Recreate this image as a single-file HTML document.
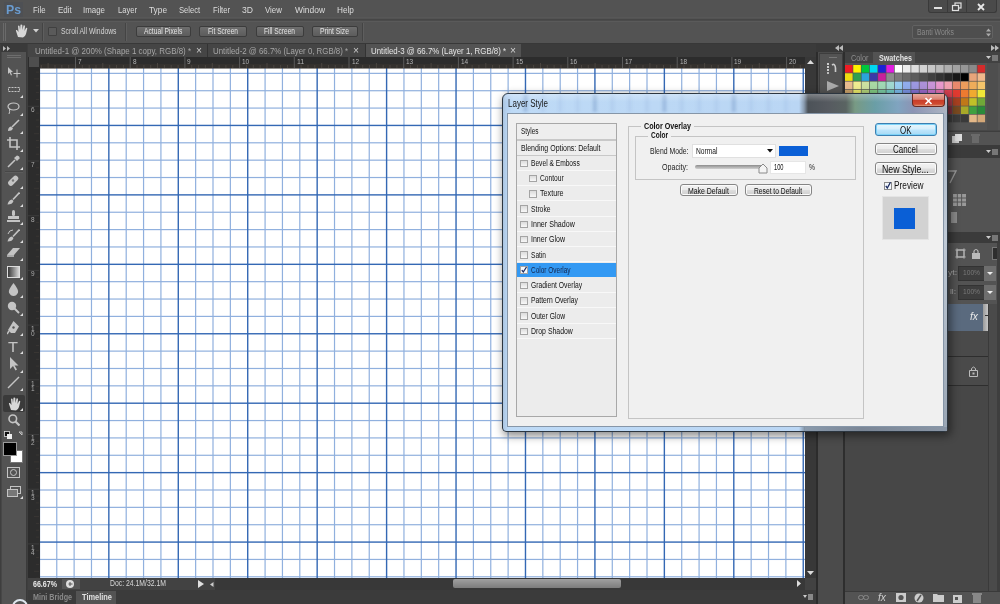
<!DOCTYPE html><html><head><meta charset="utf-8"><style>
html,body{margin:0;padding:0;width:1000px;height:604px;overflow:hidden;background:#535353;}
body>div,body>span,body>svg{position:absolute;}
span{font-family:"Liberation Sans",sans-serif;white-space:nowrap;transform-origin:0 50%;display:block;}
</style></head><body>
<div style="left:0px;top:0px;width:1000px;height:604px;background:#535353;"></div>
<div style="left:0px;top:0px;width:1000px;height:18px;background:#535353;"></div>
<div style="left:0px;top:17px;width:1000px;height:1px;background:#575757;"></div>
<div style="left:0px;top:19px;width:1000px;height:1px;background:#464646;"></div>
<div style="left:0px;top:20px;width:1000px;height:1px;background:#4b4b4b;"></div>
<div style="left:0px;top:21px;width:1000px;height:1px;background:#5a5a5a;"></div>
<div style="left:0px;top:22px;width:1000px;height:21px;background:#535353;"></div>
<div style="left:0px;top:43px;width:1000px;height:1px;background:#383838;"></div>
<div style="left:4px;top:2px;width:19px;height:15px;background:#4e5054;"></div>
<span style="left:5.5px;top:3.08px;font-size:13px;line-height:13px;color:#6a9cd0;font-weight:700;transform:scaleX(0.943);-webkit-text-stroke:0;">Ps</span>
<span style="left:33px;top:5.04px;font-size:9.5px;line-height:9.5px;color:#dcdcdc;transform:scaleX(0.823);">File</span>
<span style="left:57.6px;top:5.04px;font-size:9.5px;line-height:9.5px;color:#dcdcdc;transform:scaleX(0.843);">Edit</span>
<span style="left:83px;top:5.04px;font-size:9.5px;line-height:9.5px;color:#dcdcdc;transform:scaleX(0.833);">Image</span>
<span style="left:117.8px;top:5.04px;font-size:9.5px;line-height:9.5px;color:#dcdcdc;transform:scaleX(0.800);">Layer</span>
<span style="left:148.6px;top:5.04px;font-size:9.5px;line-height:9.5px;color:#dcdcdc;transform:scaleX(0.874);">Type</span>
<span style="left:178.8px;top:5.04px;font-size:9.5px;line-height:9.5px;color:#dcdcdc;transform:scaleX(0.803);">Select</span>
<span style="left:213.2px;top:5.04px;font-size:9.5px;line-height:9.5px;color:#dcdcdc;transform:scaleX(0.810);">Filter</span>
<span style="left:242.4px;top:5.04px;font-size:9.5px;line-height:9.5px;color:#dcdcdc;transform:scaleX(0.906);">3D</span>
<span style="left:265.1px;top:5.04px;font-size:9.5px;line-height:9.5px;color:#dcdcdc;transform:scaleX(0.828);">View</span>
<span style="left:295px;top:5.04px;font-size:9.5px;line-height:9.5px;color:#dcdcdc;transform:scaleX(0.888);">Window</span>
<span style="left:337.3px;top:5.04px;font-size:9.5px;line-height:9.5px;color:#dcdcdc;transform:scaleX(0.865);">Help</span>
<div style="left:928px;top:0px;width:69px;height:13px;background:#4a4a4a;border:1px solid #3a3a3a;border-top:none;border-radius:0 0 3px 3px;box-sizing:border-box;"></div>
<div style="left:947px;top:0px;width:1px;height:13px;background:#3a3a3a;"></div>
<div style="left:966px;top:0px;width:1px;height:13px;background:#3a3a3a;"></div>
<div style="left:933.5px;top:7px;width:8px;height:2px;background:#e0e0e0;"></div>
<svg style="left:951px;top:2px" width="12" height="10"><rect x="4" y="1" width="6" height="5" fill="none" stroke="#e0e0e0" stroke-width="1.2"/><rect x="1.5" y="3.5" width="6" height="5" fill="#4a4a4a" stroke="#e0e0e0" stroke-width="1.2"/></svg>
<svg style="left:976px;top:2px" width="10" height="10"><path d="M2 2L8 8M8 2L2 8" stroke="#e8e8e8" stroke-width="1.8"/></svg>
<div style="left:3px;top:23px;width:1px;height:18px;background:#6a6a6a;"></div>
<div style="left:5px;top:23px;width:1px;height:18px;background:#6a6a6a;"></div>
<svg style="left:14px;top:23px" width="16" height="16" viewBox="0 0 16 16"><path d="M4 14 L2 8 Q1.5 6.5 3 7 L4.5 9 L4 3 Q4.5 2 5.5 3 L6 7 L6.5 1.8 Q7.5 1 8.3 2 L8.5 7 L9.5 2.5 Q10.5 2 11 3 L10.5 8 L12 5 Q13 4.5 13.3 5.5 L12 11 Q11 14 9 14.5 Z" fill="#d8d8d8"/></svg>
<svg style="left:33px;top:29px" width="6" height="4"><path d="M0 0H6L3 3.5Z" fill="#d0d0d0"/></svg>
<div style="left:42px;top:23px;width:1px;height:18px;background:#444;"></div>
<div style="left:43px;top:23px;width:1px;height:18px;background:#5e5e5e;"></div>
<div style="left:47.5px;top:27px;width:9px;height:9px;background:#5a5a5a;border:1px solid #404040;box-sizing:border-box;border-radius:1px;"></div>
<span style="left:60.5px;top:26.79px;font-size:9px;line-height:9px;color:#d4d4d4;transform:scaleX(0.755);">Scroll All Windows</span>
<div style="left:125px;top:23px;width:1px;height:18px;background:#444;"></div>
<div style="left:126px;top:23px;width:1px;height:18px;background:#5e5e5e;"></div>
<div style="left:135.6px;top:25.9px;width:55.599999999999994px;height:11.5px;background:linear-gradient(#6e6e6e,#5c5c5c);border:1px solid #3c3c3c;box-sizing:border-box;border-radius:2px;"></div>
<span style="left:144.2px;top:27.09px;font-size:9px;line-height:9px;color:#e4e4e4;transform:scaleX(0.745);">Actual Pixels</span>
<div style="left:199px;top:25.9px;width:47.599999999999994px;height:11.5px;background:linear-gradient(#6e6e6e,#5c5c5c);border:1px solid #3c3c3c;box-sizing:border-box;border-radius:2px;"></div>
<span style="left:207.8px;top:27.09px;font-size:9px;line-height:9px;color:#e4e4e4;transform:scaleX(0.731);">Fit Screen</span>
<div style="left:255.5px;top:25.9px;width:48.5px;height:11.5px;background:linear-gradient(#6e6e6e,#5c5c5c);border:1px solid #3c3c3c;box-sizing:border-box;border-radius:2px;"></div>
<span style="left:264.25px;top:27.09px;font-size:9px;line-height:9px;color:#e4e4e4;transform:scaleX(0.729);">Fill Screen</span>
<div style="left:312px;top:25.9px;width:45.5px;height:11.5px;background:linear-gradient(#6e6e6e,#5c5c5c);border:1px solid #3c3c3c;box-sizing:border-box;border-radius:2px;"></div>
<span style="left:320.25px;top:27.09px;font-size:9px;line-height:9px;color:#e4e4e4;transform:scaleX(0.753);">Print Size</span>
<div style="left:362px;top:23px;width:1px;height:18px;background:#444;"></div>
<div style="left:363px;top:23px;width:1px;height:18px;background:#5e5e5e;"></div>
<div style="left:912px;top:25px;width:81px;height:14px;background:#4e4e4e;border:1px solid #626262;box-sizing:border-box;border-radius:2px;"></div>
<span style="left:917px;top:27.74px;font-size:8.5px;line-height:8.5px;color:#8a8a8a;transform:scaleX(0.810);">Banti Works</span>
<svg style="left:986px;top:28px" width="5" height="9"><path d="M0 3.5L2.5 0.5L5 3.5ZM0 5.5L2.5 8.5L5 5.5Z" fill="#aaa"/></svg>
<div style="left:28px;top:44px;width:790px;height:13px;background:#3b3b3b;"></div>
<div style="left:28px;top:44px;width:179px;height:13px;background:#454545;"></div>
<div style="left:207px;top:44px;width:1px;height:13px;background:#333;"></div>
<div style="left:208px;top:44px;width:157px;height:13px;background:#454545;"></div>
<div style="left:365px;top:44px;width:1px;height:13px;background:#333;"></div>
<div style="left:366px;top:44px;width:155px;height:13px;background:#535353;"></div>
<span style="left:35px;top:46.89px;font-size:9px;line-height:9px;color:#a6a6a6;transform:scaleX(0.884);">Untitled-1 @ 200% (Shape 1 copy, RGB/8) *</span>
<span style="left:196px;top:46.38px;font-size:10px;line-height:10px;color:#c8c8c8;transform:scaleX(1.027);">×</span>
<span style="left:213px;top:46.89px;font-size:9px;line-height:9px;color:#a6a6a6;transform:scaleX(0.873);">Untitled-2 @ 66.7% (Layer 0, RGB/8) *</span>
<span style="left:353px;top:46.38px;font-size:10px;line-height:10px;color:#c8c8c8;transform:scaleX(1.027);">×</span>
<span style="left:371px;top:46.89px;font-size:9px;line-height:9px;color:#e6e6e6;transform:scaleX(0.873);">Untitled-3 @ 66.7% (Layer 1, RGB/8) *</span>
<span style="left:510px;top:46.38px;font-size:10px;line-height:10px;color:#d0d0d0;transform:scaleX(1.027);">×</span>
<div style="left:0px;top:44px;width:28px;height:560px;background:#3e3e3e;"></div>
<div style="left:1px;top:44px;width:26px;height:8px;background:#3a3a3a;"></div>
<svg style="left:3px;top:46px" width="8" height="5"><path d="M0 0L3 2.5L0 5ZM4 0L7 2.5L4 5Z" fill="#bbb"/></svg>
<div style="left:1px;top:52px;width:26px;height:552px;background:#535353;border-left:1px solid #474747;border-right:1px solid #3a3a3a;box-sizing:border-box;"></div>
<div style="left:7px;top:55px;width:14px;height:1px;background:#6e6e6e;"></div>
<div style="left:7px;top:57px;width:14px;height:1px;background:#6e6e6e;"></div>
<div style="left:28px;top:57px;width:777px;height:11px;background:#2c2c2c;"></div>
<div style="left:28px;top:57px;width:12px;height:521px;background:#2c2c2c;"></div>
<div style="left:29px;top:57px;width:10px;height:10px;background:#4e4e4e;"></div>
<div style="left:40px;top:64px;width:765px;height:4px;background:#34312e;"></div>
<div style="left:40px;top:68px;width:765px;height:510px;background:#ffffff;"></div>
<div style="left:805px;top:57px;width:11px;height:521px;background:#383838;"></div>
<div style="left:805px;top:578px;width:11px;height:10px;background:#4a4a4a;"></div>
<div style="left:28px;top:578px;width:790px;height:12px;background:#424242;"></div>
<div style="left:28px;top:590px;width:790px;height:14px;background:#3b3b3b;"></div>
<div style="left:816px;top:44px;width:2px;height:560px;background:#2c2c2c;"></div>
<div style="left:818px;top:52px;width:25px;height:552px;background:#4b4b4b;"></div>
<div style="left:843px;top:44px;width:2px;height:560px;background:#2e2e2e;"></div>
<div style="left:845px;top:44px;width:155px;height:560px;background:#474747;"></div>
<svg style="left:40px;top:68px" width="765" height="510"><rect x="16.16" y="0" width="1.2" height="510" fill="#90b0de"/><rect x="33.52" y="0" width="1.2" height="510" fill="#90b0de"/><rect x="50.88" y="0" width="1.2" height="510" fill="#90b0de"/><rect x="85.60" y="0" width="1.2" height="510" fill="#90b0de"/><rect x="102.96" y="0" width="1.2" height="510" fill="#90b0de"/><rect x="120.32" y="0" width="1.2" height="510" fill="#90b0de"/><rect x="155.04" y="0" width="1.2" height="510" fill="#90b0de"/><rect x="172.40" y="0" width="1.2" height="510" fill="#90b0de"/><rect x="189.76" y="0" width="1.2" height="510" fill="#90b0de"/><rect x="224.48" y="0" width="1.2" height="510" fill="#90b0de"/><rect x="241.84" y="0" width="1.2" height="510" fill="#90b0de"/><rect x="259.20" y="0" width="1.2" height="510" fill="#90b0de"/><rect x="293.92" y="0" width="1.2" height="510" fill="#90b0de"/><rect x="311.28" y="0" width="1.2" height="510" fill="#90b0de"/><rect x="328.64" y="0" width="1.2" height="510" fill="#90b0de"/><rect x="363.36" y="0" width="1.2" height="510" fill="#90b0de"/><rect x="380.72" y="0" width="1.2" height="510" fill="#90b0de"/><rect x="398.08" y="0" width="1.2" height="510" fill="#90b0de"/><rect x="432.80" y="0" width="1.2" height="510" fill="#90b0de"/><rect x="450.16" y="0" width="1.2" height="510" fill="#90b0de"/><rect x="467.52" y="0" width="1.2" height="510" fill="#90b0de"/><rect x="502.24" y="0" width="1.2" height="510" fill="#90b0de"/><rect x="519.60" y="0" width="1.2" height="510" fill="#90b0de"/><rect x="536.96" y="0" width="1.2" height="510" fill="#90b0de"/><rect x="571.68" y="0" width="1.2" height="510" fill="#90b0de"/><rect x="589.04" y="0" width="1.2" height="510" fill="#90b0de"/><rect x="606.40" y="0" width="1.2" height="510" fill="#90b0de"/><rect x="641.12" y="0" width="1.2" height="510" fill="#90b0de"/><rect x="658.48" y="0" width="1.2" height="510" fill="#90b0de"/><rect x="675.84" y="0" width="1.2" height="510" fill="#90b0de"/><rect x="710.56" y="0" width="1.2" height="510" fill="#90b0de"/><rect x="727.92" y="0" width="1.2" height="510" fill="#90b0de"/><rect x="745.28" y="0" width="1.2" height="510" fill="#90b0de"/><rect x="0" y="4.76" width="765" height="1.2" fill="#90b0de"/><rect x="0" y="22.12" width="765" height="1.2" fill="#90b0de"/><rect x="0" y="39.48" width="765" height="1.2" fill="#90b0de"/><rect x="0" y="74.20" width="765" height="1.2" fill="#90b0de"/><rect x="0" y="91.56" width="765" height="1.2" fill="#90b0de"/><rect x="0" y="108.92" width="765" height="1.2" fill="#90b0de"/><rect x="0" y="143.64" width="765" height="1.2" fill="#90b0de"/><rect x="0" y="161.00" width="765" height="1.2" fill="#90b0de"/><rect x="0" y="178.36" width="765" height="1.2" fill="#90b0de"/><rect x="0" y="213.08" width="765" height="1.2" fill="#90b0de"/><rect x="0" y="230.44" width="765" height="1.2" fill="#90b0de"/><rect x="0" y="247.80" width="765" height="1.2" fill="#90b0de"/><rect x="0" y="282.52" width="765" height="1.2" fill="#90b0de"/><rect x="0" y="299.88" width="765" height="1.2" fill="#90b0de"/><rect x="0" y="317.24" width="765" height="1.2" fill="#90b0de"/><rect x="0" y="351.96" width="765" height="1.2" fill="#90b0de"/><rect x="0" y="369.32" width="765" height="1.2" fill="#90b0de"/><rect x="0" y="386.68" width="765" height="1.2" fill="#90b0de"/><rect x="0" y="421.40" width="765" height="1.2" fill="#90b0de"/><rect x="0" y="438.76" width="765" height="1.2" fill="#90b0de"/><rect x="0" y="456.12" width="765" height="1.2" fill="#90b0de"/><rect x="0" y="490.84" width="765" height="1.2" fill="#90b0de"/><rect x="0" y="508.20" width="765" height="1.2" fill="#90b0de"/><rect x="-1.30" y="0" width="1.4" height="510" fill="#3468b4"/><rect x="68.14" y="0" width="1.4" height="510" fill="#3468b4"/><rect x="137.58" y="0" width="1.4" height="510" fill="#3468b4"/><rect x="207.02" y="0" width="1.4" height="510" fill="#3468b4"/><rect x="276.46" y="0" width="1.4" height="510" fill="#3468b4"/><rect x="345.90" y="0" width="1.4" height="510" fill="#3468b4"/><rect x="415.34" y="0" width="1.4" height="510" fill="#3468b4"/><rect x="484.78" y="0" width="1.4" height="510" fill="#3468b4"/><rect x="554.22" y="0" width="1.4" height="510" fill="#3468b4"/><rect x="623.66" y="0" width="1.4" height="510" fill="#3468b4"/><rect x="693.10" y="0" width="1.4" height="510" fill="#3468b4"/><rect x="762.54" y="0" width="1.4" height="510" fill="#3468b4"/><rect x="0" y="56.74" width="765" height="1.4" fill="#3468b4"/><rect x="0" y="126.18" width="765" height="1.4" fill="#3468b4"/><rect x="0" y="195.62" width="765" height="1.4" fill="#3468b4"/><rect x="0" y="265.06" width="765" height="1.4" fill="#3468b4"/><rect x="0" y="334.50" width="765" height="1.4" fill="#3468b4"/><rect x="0" y="403.94" width="765" height="1.4" fill="#3468b4"/><rect x="0" y="473.38" width="765" height="1.4" fill="#3468b4"/></svg>
<div style="left:40px;top:68px;width:765px;height:1px;background:rgba(52,49,46,0.55);"></div>
<svg style="left:40px;top:57px" width="765" height="11"><rect x="0.8" y="8" width="1" height="3" fill="#4a4540"/><rect x="7.6" y="6" width="1" height="5" fill="#4a4540"/><rect x="14.5" y="8" width="1" height="3" fill="#4a4540"/><rect x="21.3" y="8" width="1" height="3" fill="#4a4540"/><rect x="28.2" y="8" width="1" height="3" fill="#4a4540"/><rect x="35.0" y="0" width="1" height="11" fill="#5a5a5a"/><rect x="41.8" y="8" width="1" height="3" fill="#4a4540"/><rect x="48.7" y="8" width="1" height="3" fill="#4a4540"/><rect x="55.5" y="8" width="1" height="3" fill="#4a4540"/><rect x="62.3" y="6" width="1" height="5" fill="#4a4540"/><rect x="69.2" y="8" width="1" height="3" fill="#4a4540"/><rect x="76.0" y="8" width="1" height="3" fill="#4a4540"/><rect x="82.9" y="8" width="1" height="3" fill="#4a4540"/><rect x="89.7" y="0" width="1" height="11" fill="#5a5a5a"/><rect x="96.5" y="8" width="1" height="3" fill="#4a4540"/><rect x="103.4" y="8" width="1" height="3" fill="#4a4540"/><rect x="110.2" y="8" width="1" height="3" fill="#4a4540"/><rect x="117.0" y="6" width="1" height="5" fill="#4a4540"/><rect x="123.9" y="8" width="1" height="3" fill="#4a4540"/><rect x="130.7" y="8" width="1" height="3" fill="#4a4540"/><rect x="137.6" y="8" width="1" height="3" fill="#4a4540"/><rect x="144.4" y="0" width="1" height="11" fill="#5a5a5a"/><rect x="151.2" y="8" width="1" height="3" fill="#4a4540"/><rect x="158.1" y="8" width="1" height="3" fill="#4a4540"/><rect x="164.9" y="8" width="1" height="3" fill="#4a4540"/><rect x="171.8" y="6" width="1" height="5" fill="#4a4540"/><rect x="178.6" y="8" width="1" height="3" fill="#4a4540"/><rect x="185.4" y="8" width="1" height="3" fill="#4a4540"/><rect x="192.3" y="8" width="1" height="3" fill="#4a4540"/><rect x="199.1" y="0" width="1" height="11" fill="#5a5a5a"/><rect x="205.9" y="8" width="1" height="3" fill="#4a4540"/><rect x="212.8" y="8" width="1" height="3" fill="#4a4540"/><rect x="219.6" y="8" width="1" height="3" fill="#4a4540"/><rect x="226.5" y="6" width="1" height="5" fill="#4a4540"/><rect x="233.3" y="8" width="1" height="3" fill="#4a4540"/><rect x="240.1" y="8" width="1" height="3" fill="#4a4540"/><rect x="247.0" y="8" width="1" height="3" fill="#4a4540"/><rect x="253.8" y="0" width="1" height="11" fill="#5a5a5a"/><rect x="260.6" y="8" width="1" height="3" fill="#4a4540"/><rect x="267.5" y="8" width="1" height="3" fill="#4a4540"/><rect x="274.3" y="8" width="1" height="3" fill="#4a4540"/><rect x="281.2" y="6" width="1" height="5" fill="#4a4540"/><rect x="288.0" y="8" width="1" height="3" fill="#4a4540"/><rect x="294.8" y="8" width="1" height="3" fill="#4a4540"/><rect x="301.7" y="8" width="1" height="3" fill="#4a4540"/><rect x="308.5" y="0" width="1" height="11" fill="#5a5a5a"/><rect x="315.3" y="8" width="1" height="3" fill="#4a4540"/><rect x="322.2" y="8" width="1" height="3" fill="#4a4540"/><rect x="329.0" y="8" width="1" height="3" fill="#4a4540"/><rect x="335.9" y="6" width="1" height="5" fill="#4a4540"/><rect x="342.7" y="8" width="1" height="3" fill="#4a4540"/><rect x="349.5" y="8" width="1" height="3" fill="#4a4540"/><rect x="356.4" y="8" width="1" height="3" fill="#4a4540"/><rect x="363.2" y="0" width="1" height="11" fill="#5a5a5a"/><rect x="370.0" y="8" width="1" height="3" fill="#4a4540"/><rect x="376.9" y="8" width="1" height="3" fill="#4a4540"/><rect x="383.7" y="8" width="1" height="3" fill="#4a4540"/><rect x="390.6" y="6" width="1" height="5" fill="#4a4540"/><rect x="397.4" y="8" width="1" height="3" fill="#4a4540"/><rect x="404.2" y="8" width="1" height="3" fill="#4a4540"/><rect x="411.1" y="8" width="1" height="3" fill="#4a4540"/><rect x="417.9" y="0" width="1" height="11" fill="#5a5a5a"/><rect x="424.7" y="8" width="1" height="3" fill="#4a4540"/><rect x="431.6" y="8" width="1" height="3" fill="#4a4540"/><rect x="438.4" y="8" width="1" height="3" fill="#4a4540"/><rect x="445.3" y="6" width="1" height="5" fill="#4a4540"/><rect x="452.1" y="8" width="1" height="3" fill="#4a4540"/><rect x="458.9" y="8" width="1" height="3" fill="#4a4540"/><rect x="465.8" y="8" width="1" height="3" fill="#4a4540"/><rect x="472.6" y="0" width="1" height="11" fill="#5a5a5a"/><rect x="479.4" y="8" width="1" height="3" fill="#4a4540"/><rect x="486.3" y="8" width="1" height="3" fill="#4a4540"/><rect x="493.1" y="8" width="1" height="3" fill="#4a4540"/><rect x="500.0" y="6" width="1" height="5" fill="#4a4540"/><rect x="506.8" y="8" width="1" height="3" fill="#4a4540"/><rect x="513.6" y="8" width="1" height="3" fill="#4a4540"/><rect x="520.5" y="8" width="1" height="3" fill="#4a4540"/><rect x="527.3" y="0" width="1" height="11" fill="#5a5a5a"/><rect x="534.1" y="8" width="1" height="3" fill="#4a4540"/><rect x="541.0" y="8" width="1" height="3" fill="#4a4540"/><rect x="547.8" y="8" width="1" height="3" fill="#4a4540"/><rect x="554.6" y="6" width="1" height="5" fill="#4a4540"/><rect x="561.5" y="8" width="1" height="3" fill="#4a4540"/><rect x="568.3" y="8" width="1" height="3" fill="#4a4540"/><rect x="575.2" y="8" width="1" height="3" fill="#4a4540"/><rect x="582.0" y="0" width="1" height="11" fill="#5a5a5a"/><rect x="588.8" y="8" width="1" height="3" fill="#4a4540"/><rect x="595.7" y="8" width="1" height="3" fill="#4a4540"/><rect x="602.5" y="8" width="1" height="3" fill="#4a4540"/><rect x="609.4" y="6" width="1" height="5" fill="#4a4540"/><rect x="616.2" y="8" width="1" height="3" fill="#4a4540"/><rect x="623.0" y="8" width="1" height="3" fill="#4a4540"/><rect x="629.9" y="8" width="1" height="3" fill="#4a4540"/><rect x="636.7" y="0" width="1" height="11" fill="#5a5a5a"/><rect x="643.5" y="8" width="1" height="3" fill="#4a4540"/><rect x="650.4" y="8" width="1" height="3" fill="#4a4540"/><rect x="657.2" y="8" width="1" height="3" fill="#4a4540"/><rect x="664.1" y="6" width="1" height="5" fill="#4a4540"/><rect x="670.9" y="8" width="1" height="3" fill="#4a4540"/><rect x="677.7" y="8" width="1" height="3" fill="#4a4540"/><rect x="684.6" y="8" width="1" height="3" fill="#4a4540"/><rect x="691.4" y="0" width="1" height="11" fill="#5a5a5a"/><rect x="698.2" y="8" width="1" height="3" fill="#4a4540"/><rect x="705.1" y="8" width="1" height="3" fill="#4a4540"/><rect x="711.9" y="8" width="1" height="3" fill="#4a4540"/><rect x="718.8" y="6" width="1" height="5" fill="#4a4540"/><rect x="725.6" y="8" width="1" height="3" fill="#4a4540"/><rect x="732.4" y="8" width="1" height="3" fill="#4a4540"/><rect x="739.3" y="8" width="1" height="3" fill="#4a4540"/><rect x="746.1" y="0" width="1" height="11" fill="#5a5a5a"/><rect x="752.9" y="8" width="1" height="3" fill="#4a4540"/><rect x="759.8" y="8" width="1" height="3" fill="#4a4540"/></svg>
<span style="left:78.0px;top:57.99px;font-size:7px;line-height:7px;color:#b4b4b4;transform:scaleX(0.925);">7</span>
<span style="left:132.7px;top:57.99px;font-size:7px;line-height:7px;color:#b4b4b4;transform:scaleX(0.925);">8</span>
<span style="left:187.4px;top:57.99px;font-size:7px;line-height:7px;color:#b4b4b4;transform:scaleX(0.925);">9</span>
<span style="left:242.10000000000002px;top:57.99px;font-size:7px;line-height:7px;color:#b4b4b4;transform:scaleX(0.925);">10</span>
<span style="left:296.8px;top:57.99px;font-size:7px;line-height:7px;color:#b4b4b4;transform:scaleX(0.991);">11</span>
<span style="left:351.5px;top:57.99px;font-size:7px;line-height:7px;color:#b4b4b4;transform:scaleX(0.925);">12</span>
<span style="left:406.20000000000005px;top:57.99px;font-size:7px;line-height:7px;color:#b4b4b4;transform:scaleX(0.925);">13</span>
<span style="left:460.90000000000003px;top:57.99px;font-size:7px;line-height:7px;color:#b4b4b4;transform:scaleX(0.925);">14</span>
<span style="left:515.6px;top:57.99px;font-size:7px;line-height:7px;color:#b4b4b4;transform:scaleX(0.925);">15</span>
<span style="left:570.3px;top:57.99px;font-size:7px;line-height:7px;color:#b4b4b4;transform:scaleX(0.925);">16</span>
<span style="left:625.0px;top:57.99px;font-size:7px;line-height:7px;color:#b4b4b4;transform:scaleX(0.925);">17</span>
<span style="left:679.7px;top:57.99px;font-size:7px;line-height:7px;color:#b4b4b4;transform:scaleX(0.925);">18</span>
<span style="left:734.4000000000001px;top:57.99px;font-size:7px;line-height:7px;color:#b4b4b4;transform:scaleX(0.925);">19</span>
<span style="left:789.1px;top:57.99px;font-size:7px;line-height:7px;color:#b4b4b4;transform:scaleX(0.925);">20</span>
<svg style="left:28px;top:68px" width="11" height="510"><rect x="8" y="3.6" width="3" height="1" fill="#393633"/><rect x="6" y="10.4" width="5" height="1" fill="#393633"/><rect x="8" y="17.3" width="3" height="1" fill="#393633"/><rect x="8" y="24.1" width="3" height="1" fill="#393633"/><rect x="8" y="31.0" width="3" height="1" fill="#393633"/><rect x="0" y="37.8" width="11" height="1" fill="#3c3c3c"/><rect x="8" y="44.6" width="3" height="1" fill="#393633"/><rect x="8" y="51.5" width="3" height="1" fill="#393633"/><rect x="8" y="58.3" width="3" height="1" fill="#393633"/><rect x="6" y="65.2" width="5" height="1" fill="#393633"/><rect x="8" y="72.0" width="3" height="1" fill="#393633"/><rect x="8" y="78.8" width="3" height="1" fill="#393633"/><rect x="8" y="85.7" width="3" height="1" fill="#393633"/><rect x="0" y="92.5" width="11" height="1" fill="#3c3c3c"/><rect x="8" y="99.3" width="3" height="1" fill="#393633"/><rect x="8" y="106.2" width="3" height="1" fill="#393633"/><rect x="8" y="113.0" width="3" height="1" fill="#393633"/><rect x="6" y="119.8" width="5" height="1" fill="#393633"/><rect x="8" y="126.7" width="3" height="1" fill="#393633"/><rect x="8" y="133.5" width="3" height="1" fill="#393633"/><rect x="8" y="140.4" width="3" height="1" fill="#393633"/><rect x="0" y="147.2" width="11" height="1" fill="#3c3c3c"/><rect x="8" y="154.0" width="3" height="1" fill="#393633"/><rect x="8" y="160.9" width="3" height="1" fill="#393633"/><rect x="8" y="167.7" width="3" height="1" fill="#393633"/><rect x="6" y="174.5" width="5" height="1" fill="#393633"/><rect x="8" y="181.4" width="3" height="1" fill="#393633"/><rect x="8" y="188.2" width="3" height="1" fill="#393633"/><rect x="8" y="195.1" width="3" height="1" fill="#393633"/><rect x="0" y="201.9" width="11" height="1" fill="#3c3c3c"/><rect x="8" y="208.7" width="3" height="1" fill="#393633"/><rect x="8" y="215.6" width="3" height="1" fill="#393633"/><rect x="8" y="222.4" width="3" height="1" fill="#393633"/><rect x="6" y="229.3" width="5" height="1" fill="#393633"/><rect x="8" y="236.1" width="3" height="1" fill="#393633"/><rect x="8" y="242.9" width="3" height="1" fill="#393633"/><rect x="8" y="249.8" width="3" height="1" fill="#393633"/><rect x="0" y="256.6" width="11" height="1" fill="#3c3c3c"/><rect x="8" y="263.4" width="3" height="1" fill="#393633"/><rect x="8" y="270.3" width="3" height="1" fill="#393633"/><rect x="8" y="277.1" width="3" height="1" fill="#393633"/><rect x="6" y="284.0" width="5" height="1" fill="#393633"/><rect x="8" y="290.8" width="3" height="1" fill="#393633"/><rect x="8" y="297.6" width="3" height="1" fill="#393633"/><rect x="8" y="304.5" width="3" height="1" fill="#393633"/><rect x="0" y="311.3" width="11" height="1" fill="#3c3c3c"/><rect x="8" y="318.1" width="3" height="1" fill="#393633"/><rect x="8" y="325.0" width="3" height="1" fill="#393633"/><rect x="8" y="331.8" width="3" height="1" fill="#393633"/><rect x="6" y="338.7" width="5" height="1" fill="#393633"/><rect x="8" y="345.5" width="3" height="1" fill="#393633"/><rect x="8" y="352.3" width="3" height="1" fill="#393633"/><rect x="8" y="359.2" width="3" height="1" fill="#393633"/><rect x="0" y="366.0" width="11" height="1" fill="#3c3c3c"/><rect x="8" y="372.8" width="3" height="1" fill="#393633"/><rect x="8" y="379.7" width="3" height="1" fill="#393633"/><rect x="8" y="386.5" width="3" height="1" fill="#393633"/><rect x="6" y="393.4" width="5" height="1" fill="#393633"/><rect x="8" y="400.2" width="3" height="1" fill="#393633"/><rect x="8" y="407.0" width="3" height="1" fill="#393633"/><rect x="8" y="413.9" width="3" height="1" fill="#393633"/><rect x="0" y="420.7" width="11" height="1" fill="#3c3c3c"/><rect x="8" y="427.5" width="3" height="1" fill="#393633"/><rect x="8" y="434.4" width="3" height="1" fill="#393633"/><rect x="8" y="441.2" width="3" height="1" fill="#393633"/><rect x="6" y="448.1" width="5" height="1" fill="#393633"/><rect x="8" y="454.9" width="3" height="1" fill="#393633"/><rect x="8" y="461.7" width="3" height="1" fill="#393633"/><rect x="8" y="468.6" width="3" height="1" fill="#393633"/><rect x="0" y="475.4" width="11" height="1" fill="#3c3c3c"/><rect x="8" y="482.2" width="3" height="1" fill="#393633"/><rect x="8" y="489.1" width="3" height="1" fill="#393633"/><rect x="8" y="495.9" width="3" height="1" fill="#393633"/><rect x="6" y="502.8" width="5" height="1" fill="#393633"/><rect x="8" y="509.6" width="3" height="1" fill="#393633"/></svg>
<span style="left:31px;top:106.29px;font-size:7px;line-height:7px;color:#a8a8a8;transform:scaleX(0.925);">6</span>
<span style="left:31px;top:160.99px;font-size:7px;line-height:7px;color:#a8a8a8;transform:scaleX(0.925);">7</span>
<span style="left:31px;top:215.69px;font-size:7px;line-height:7px;color:#a8a8a8;transform:scaleX(0.925);">8</span>
<span style="left:31px;top:270.39px;font-size:7px;line-height:7px;color:#a8a8a8;transform:scaleX(0.925);">9</span>
<span style="left:31px;top:325.09px;font-size:7px;line-height:7px;color:#a8a8a8;transform:scaleX(0.925);">1</span>
<span style="left:31px;top:330.09px;font-size:7px;line-height:7px;color:#a8a8a8;transform:scaleX(0.925);">0</span>
<span style="left:31px;top:379.79px;font-size:7px;line-height:7px;color:#a8a8a8;transform:scaleX(0.925);">1</span>
<span style="left:31px;top:384.79px;font-size:7px;line-height:7px;color:#a8a8a8;transform:scaleX(0.925);">1</span>
<span style="left:31px;top:434.49px;font-size:7px;line-height:7px;color:#a8a8a8;transform:scaleX(0.925);">1</span>
<span style="left:31px;top:439.49px;font-size:7px;line-height:7px;color:#a8a8a8;transform:scaleX(0.925);">2</span>
<span style="left:31px;top:489.19px;font-size:7px;line-height:7px;color:#a8a8a8;transform:scaleX(0.925);">1</span>
<span style="left:31px;top:494.19px;font-size:7px;line-height:7px;color:#a8a8a8;transform:scaleX(0.925);">3</span>
<span style="left:31px;top:543.89px;font-size:7px;line-height:7px;color:#a8a8a8;transform:scaleX(0.925);">1</span>
<span style="left:31px;top:548.89px;font-size:7px;line-height:7px;color:#a8a8a8;transform:scaleX(0.925);">4</span>
<span style="left:33px;top:579.79px;font-size:9px;line-height:9px;color:#e8e8e8;font-weight:700;transform:scaleX(0.786);">66.67%</span>
<div style="left:62px;top:579px;width:18px;height:10px;background:#555;"></div>
<svg style="left:64px;top:579px" width="12" height="10"><circle cx="6" cy="5" r="4" fill="#ddd"/><path d="M4.5 5h4M6 3v4" stroke="#555" stroke-width="1"/></svg>
<span style="left:110px;top:579.49px;font-size:9px;line-height:9px;color:#d8d8d8;transform:scaleX(0.762);">Doc: 24.1M/32.1M</span>
<svg style="left:198px;top:580px" width="7" height="8"><path d="M0 0L6 4L0 8Z" fill="#e0e0e0"/></svg>
<svg style="left:210px;top:582px" width="4" height="5"><path d="M3.5 0L0 2.5L3.5 5Z" fill="#ccc"/></svg>
<div style="left:215px;top:578px;width:590px;height:12px;background:#383838;"></div>
<div style="left:453px;top:579px;width:168px;height:9px;background:linear-gradient(#a0a0a0,#7c7c7c);border-radius:2px;"></div>
<svg style="left:797px;top:580px" width="5" height="7"><path d="M0 0L4 3.5L0 7Z" fill="#ddd"/></svg>
<svg style="left:807px;top:571px" width="7" height="5"><path d="M0 0L7 0L3.5 4Z" fill="#ddd"/></svg>
<svg style="left:807px;top:60px" width="7" height="5"><path d="M0 4L3.5 0L7 4Z" fill="#ddd"/></svg>
<div style="left:76px;top:591px;width:40px;height:13px;background:#535353;"></div>
<span style="left:33px;top:592.99px;font-size:9px;line-height:9px;color:#8a8a8a;font-weight:700;transform:scaleX(0.796);">Mini Bridge</span>
<span style="left:82px;top:592.99px;font-size:9px;line-height:9px;color:#e0e0e0;font-weight:700;transform:scaleX(0.825);">Timeline</span>
<svg style="left:803px;top:594px" width="10" height="7"><path d="M0 1L4 1L2 4Z" fill="#ccc"/><rect x="5" y="0" width="5" height="6" fill="#888"/></svg>
<div style="left:816px;top:44px;width:184px;height:8px;background:#383838;"></div>
<svg style="left:835px;top:45px" width="8" height="6"><path d="M4 0L0 3L4 6ZM8 0L4 3L8 6Z" fill="#bbb"/></svg>
<svg style="left:991px;top:45px" width="8" height="6"><path d="M0 0L4 3L0 6ZM4 0L8 3L4 6Z" fill="#bbb"/></svg>
<div style="left:818px;top:52px;width:25px;height:552px;background:#4b4b4b;"></div>
<div style="left:819px;top:53px;width:24px;height:48px;background:#535353;border:1px solid #3d3d3d;box-sizing:border-box;"></div>
<div style="left:829px;top:57px;width:8px;height:1px;background:#777;"></div>
<svg style="left:826px;top:62px" width="14" height="12"><rect x="1" y="1" width="2" height="2" fill="#ccc"/><rect x="1" y="4" width="2" height="2" fill="#ccc"/><rect x="1" y="7" width="2" height="2" fill="#ccc"/><rect x="1" y="10" width="2" height="2" fill="#bbb"/><path d="M6 3Q9 1 9.5 6L9.5 10" stroke="#ccc" stroke-width="1.6" fill="none"/></svg>
<svg style="left:826px;top:80px" width="14" height="12"><path d="M1 1L13 6L1 11Z" fill="#aaa"/></svg>
<div style="left:845px;top:52px;width:155px;height:78px;background:#535353;"></div>
<div style="left:845px;top:52px;width:155px;height:11px;background:#424242;"></div>
<div style="left:873px;top:52px;width:42px;height:11px;background:#535353;"></div>
<span style="left:850.5px;top:53.74px;font-size:8.5px;line-height:8.5px;color:#8e8e8e;transform:scaleX(0.862);">Color</span>
<span style="left:878.5px;top:53.74px;font-size:8.5px;line-height:8.5px;color:#e4e4e4;font-weight:700;transform:scaleX(0.842);">Swatches</span>
<svg style="left:986px;top:55px" width="12" height="7"><path d="M0 1L5 1L2.5 4Z" fill="#ccc"/><rect x="6" y="0" width="6" height="6" fill="#777"/></svg>
<svg style="left:845px;top:65px" width="142" height="58"><rect x="0.00" y="0.00" width="7.6" height="7.6" fill="#ed1c24"/><rect x="8.28" y="0.00" width="7.6" height="7.6" fill="#fff200"/><rect x="16.56" y="0.00" width="7.6" height="7.6" fill="#00c83c"/><rect x="24.84" y="0.00" width="7.6" height="7.6" fill="#00d6f0"/><rect x="33.12" y="0.00" width="7.6" height="7.6" fill="#1c22d8"/><rect x="41.40" y="0.00" width="7.6" height="7.6" fill="#e01ce0"/><rect x="49.68" y="0.00" width="7.6" height="7.6" fill="#ffffff"/><rect x="57.96" y="0.00" width="7.6" height="7.6" fill="#ececec"/><rect x="66.24" y="0.00" width="7.6" height="7.6" fill="#dedede"/><rect x="74.52" y="0.00" width="7.6" height="7.6" fill="#d2d2d2"/><rect x="82.80" y="0.00" width="7.6" height="7.6" fill="#c6c6c6"/><rect x="91.08" y="0.00" width="7.6" height="7.6" fill="#bababa"/><rect x="99.36" y="0.00" width="7.6" height="7.6" fill="#aeaeae"/><rect x="107.64" y="0.00" width="7.6" height="7.6" fill="#a2a2a2"/><rect x="115.92" y="0.00" width="7.6" height="7.6" fill="#969696"/><rect x="124.20" y="0.00" width="7.6" height="7.6" fill="#8a8a8a"/><rect x="132.48" y="0.00" width="7.6" height="7.6" fill="#d42b2b"/><rect x="0.00" y="8.28" width="7.6" height="7.6" fill="#f0dc10"/><rect x="8.28" y="8.28" width="7.6" height="7.6" fill="#2fa050"/><rect x="16.56" y="8.28" width="7.6" height="7.6" fill="#2aa4dc"/><rect x="24.84" y="8.28" width="7.6" height="7.6" fill="#3a3aa8"/><rect x="33.12" y="8.28" width="7.6" height="7.6" fill="#c8209c"/><rect x="41.40" y="8.28" width="7.6" height="7.6" fill="#8c8c8c"/><rect x="49.68" y="8.28" width="7.6" height="7.6" fill="#7a7a7a"/><rect x="57.96" y="8.28" width="7.6" height="7.6" fill="#6a6a6a"/><rect x="66.24" y="8.28" width="7.6" height="7.6" fill="#5c5c5c"/><rect x="74.52" y="8.28" width="7.6" height="7.6" fill="#4e4e4e"/><rect x="82.80" y="8.28" width="7.6" height="7.6" fill="#404040"/><rect x="91.08" y="8.28" width="7.6" height="7.6" fill="#333333"/><rect x="99.36" y="8.28" width="7.6" height="7.6" fill="#262626"/><rect x="107.64" y="8.28" width="7.6" height="7.6" fill="#181818"/><rect x="115.92" y="8.28" width="7.6" height="7.6" fill="#000000"/><rect x="124.20" y="8.28" width="7.6" height="7.6" fill="#e8a47a"/><rect x="132.48" y="8.28" width="7.6" height="7.6" fill="#f0b88c"/><rect x="0.00" y="16.56" width="7.6" height="7.6" fill="#e8bc90"/><rect x="8.28" y="16.56" width="7.6" height="7.6" fill="#f0ec90"/><rect x="16.56" y="16.56" width="7.6" height="7.6" fill="#cce0a0"/><rect x="24.84" y="16.56" width="7.6" height="7.6" fill="#a8d8a4"/><rect x="33.12" y="16.56" width="7.6" height="7.6" fill="#a0d8b4"/><rect x="41.40" y="16.56" width="7.6" height="7.6" fill="#a0d8d0"/><rect x="49.68" y="16.56" width="7.6" height="7.6" fill="#98ccf0"/><rect x="57.96" y="16.56" width="7.6" height="7.6" fill="#90acec"/><rect x="66.24" y="16.56" width="7.6" height="7.6" fill="#9c98e0"/><rect x="74.52" y="16.56" width="7.6" height="7.6" fill="#ac90d8"/><rect x="82.80" y="16.56" width="7.6" height="7.6" fill="#c894d8"/><rect x="91.08" y="16.56" width="7.6" height="7.6" fill="#e898cc"/><rect x="99.36" y="16.56" width="7.6" height="7.6" fill="#f0a0b0"/><rect x="107.64" y="16.56" width="7.6" height="7.6" fill="#e8886c"/><rect x="115.92" y="16.56" width="7.6" height="7.6" fill="#ec9c5c"/><rect x="124.20" y="16.56" width="7.6" height="7.6" fill="#eeac5a"/><rect x="132.48" y="16.56" width="7.6" height="7.6" fill="#f4c46a"/><rect x="0.00" y="24.84" width="7.6" height="7.6" fill="#c8a068"/><rect x="8.28" y="24.84" width="7.6" height="7.6" fill="#e8e868"/><rect x="16.56" y="24.84" width="7.6" height="7.6" fill="#b0d078"/><rect x="24.84" y="24.84" width="7.6" height="7.6" fill="#80c880"/><rect x="33.12" y="24.84" width="7.6" height="7.6" fill="#78c8a0"/><rect x="41.40" y="24.84" width="7.6" height="7.6" fill="#70c8c0"/><rect x="49.68" y="24.84" width="7.6" height="7.6" fill="#78b8e8"/><rect x="57.96" y="24.84" width="7.6" height="7.6" fill="#7890e0"/><rect x="66.24" y="24.84" width="7.6" height="7.6" fill="#8070d0"/><rect x="74.52" y="24.84" width="7.6" height="7.6" fill="#9868c8"/><rect x="82.80" y="24.84" width="7.6" height="7.6" fill="#c070c8"/><rect x="91.08" y="24.84" width="7.6" height="7.6" fill="#e070b0"/><rect x="99.36" y="24.84" width="7.6" height="7.6" fill="#d84050"/><rect x="107.64" y="24.84" width="7.6" height="7.6" fill="#e03a30"/><rect x="115.92" y="24.84" width="7.6" height="7.6" fill="#ee7a30"/><rect x="124.20" y="24.84" width="7.6" height="7.6" fill="#f0aa30"/><rect x="132.48" y="24.84" width="7.6" height="7.6" fill="#f0e838"/><rect x="0.00" y="33.12" width="7.6" height="7.6" fill="#a87040"/><rect x="8.28" y="33.12" width="7.6" height="7.6" fill="#c8c050"/><rect x="16.56" y="33.12" width="7.6" height="7.6" fill="#98b050"/><rect x="24.84" y="33.12" width="7.6" height="7.6" fill="#60a860"/><rect x="33.12" y="33.12" width="7.6" height="7.6" fill="#58a880"/><rect x="41.40" y="33.12" width="7.6" height="7.6" fill="#50a8a0"/><rect x="49.68" y="33.12" width="7.6" height="7.6" fill="#5898c8"/><rect x="57.96" y="33.12" width="7.6" height="7.6" fill="#5870c0"/><rect x="66.24" y="33.12" width="7.6" height="7.6" fill="#6050b0"/><rect x="74.52" y="33.12" width="7.6" height="7.6" fill="#7c48a8"/><rect x="82.80" y="33.12" width="7.6" height="7.6" fill="#a048a8"/><rect x="91.08" y="33.12" width="7.6" height="7.6" fill="#c04890"/><rect x="99.36" y="33.12" width="7.6" height="7.6" fill="#a83848"/><rect x="107.64" y="33.12" width="7.6" height="7.6" fill="#a84020"/><rect x="115.92" y="33.12" width="7.6" height="7.6" fill="#c07818"/><rect x="124.20" y="33.12" width="7.6" height="7.6" fill="#c0c028"/><rect x="132.48" y="33.12" width="7.6" height="7.6" fill="#70a838"/><rect x="0.00" y="41.40" width="7.6" height="7.6" fill="#806030"/><rect x="8.28" y="41.40" width="7.6" height="7.6" fill="#a8a040"/><rect x="16.56" y="41.40" width="7.6" height="7.6" fill="#809040"/><rect x="24.84" y="41.40" width="7.6" height="7.6" fill="#488848"/><rect x="33.12" y="41.40" width="7.6" height="7.6" fill="#408868"/><rect x="41.40" y="41.40" width="7.6" height="7.6" fill="#388880"/><rect x="49.68" y="41.40" width="7.6" height="7.6" fill="#407898"/><rect x="57.96" y="41.40" width="7.6" height="7.6" fill="#405898"/><rect x="66.24" y="41.40" width="7.6" height="7.6" fill="#483888"/><rect x="74.52" y="41.40" width="7.6" height="7.6" fill="#603488"/><rect x="82.80" y="41.40" width="7.6" height="7.6" fill="#803488"/><rect x="91.08" y="41.40" width="7.6" height="7.6" fill="#983070"/><rect x="99.36" y="41.40" width="7.6" height="7.6" fill="#803040"/><rect x="107.64" y="41.40" width="7.6" height="7.6" fill="#7a4a20"/><rect x="115.92" y="41.40" width="7.6" height="7.6" fill="#a8a828"/><rect x="124.20" y="41.40" width="7.6" height="7.6" fill="#40a040"/><rect x="132.48" y="41.40" width="7.6" height="7.6" fill="#2a8a3a"/><rect x="0.00" y="49.68" width="7.6" height="7.6" fill="#604a28"/><rect x="8.28" y="49.68" width="7.6" height="7.6" fill="#808030"/><rect x="16.56" y="49.68" width="7.6" height="7.6" fill="#687030"/><rect x="24.84" y="49.68" width="7.6" height="7.6" fill="#386838"/><rect x="33.12" y="49.68" width="7.6" height="7.6" fill="#306850"/><rect x="41.40" y="49.68" width="7.6" height="7.6" fill="#306860"/><rect x="49.68" y="49.68" width="7.6" height="7.6" fill="#305870"/><rect x="57.96" y="49.68" width="7.6" height="7.6" fill="#303c70"/><rect x="66.24" y="49.68" width="7.6" height="7.6" fill="#382c68"/><rect x="74.52" y="49.68" width="7.6" height="7.6" fill="#4a2868"/><rect x="82.80" y="49.68" width="7.6" height="7.6" fill="#602868"/><rect x="91.08" y="49.68" width="7.6" height="7.6" fill="#702858"/><rect x="99.36" y="49.68" width="7.6" height="7.6" fill="#3c3c3c"/><rect x="107.64" y="49.68" width="7.6" height="7.6" fill="#3c3c3c"/><rect x="115.92" y="49.68" width="7.6" height="7.6" fill="#3a3a3a"/><rect x="124.20" y="49.68" width="7.6" height="7.6" fill="#e4b888"/><rect x="132.48" y="49.68" width="7.6" height="7.6" fill="#d4a878"/></svg>
<div style="left:987px;top:63px;width:11px;height:67px;background:#4e4e4e;"></div>
<div style="left:845px;top:131px;width:155px;height:14px;background:#535353;border-top:1px solid #3e3e3e;box-sizing:border-box;"></div>
<svg style="left:952px;top:134px" width="10" height="9"><rect x="0" y="2" width="7" height="7" fill="#ccc"/><rect x="3" y="0" width="7" height="7" fill="#ddd"/></svg>
<svg style="left:971px;top:134px" width="9" height="9"><rect x="1" y="2" width="7" height="7" fill="#6a6a6a"/><rect x="0" y="0" width="9" height="2" fill="#6a6a6a"/></svg>
<div style="left:845px;top:145px;width:155px;height:13px;background:#3b3b3b;"></div>
<svg style="left:986px;top:149px" width="12" height="7"><path d="M0 1L5 1L2.5 4Z" fill="#ccc"/><rect x="6" y="0" width="6" height="6" fill="#777"/></svg>
<div style="left:845px;top:158px;width:155px;height:74px;background:#535353;"></div>
<svg style="left:948px;top:170px" width="10" height="14"><path d="M0 1H8L2 13" stroke="#999" stroke-width="1.4" fill="none"/></svg>
<svg style="left:953px;top:194px" width="13" height="12"><rect x="0" y="0" width="13" height="12" fill="#999"/><path d="M0 4H13M0 8H13M4.3 0V12M8.6 0V12" stroke="#555" stroke-width="1"/></svg>
<div style="left:951px;top:212px;width:6px;height:11px;background:#8a8a8a;"></div>
<div style="left:845px;top:232px;width:155px;height:11px;background:#3b3b3b;"></div>
<svg style="left:986px;top:235px" width="12" height="7"><path d="M0 1L5 1L2.5 4Z" fill="#ccc"/><rect x="6" y="0" width="6" height="6" fill="#777"/></svg>
<div style="left:845px;top:243px;width:155px;height:62px;background:#535353;"></div>
<svg style="left:955px;top:248px" width="11" height="11"><rect x="2" y="2" width="7" height="7" fill="none" stroke="#bbb" stroke-width="1.2"/><path d="M2 0V11M9 0V11M0 2H11M0 9H11" stroke="#bbb" stroke-width="0.6"/></svg>
<svg style="left:971px;top:247px" width="10" height="12"><path d="M1 6H9V12H1Z" fill="#bbb"/><path d="M3 6V4Q5 1 7 4V6" stroke="#bbb" fill="none" stroke-width="1.2"/></svg>
<div style="left:992px;top:247px;width:6px;height:13px;background:#2e2e2e;border:1px solid #777;box-sizing:border-box;"></div>
<div style="left:958px;top:266px;width:27px;height:15px;background:#3e3e3e;border:1px solid #333;box-sizing:border-box;"></div>
<span style="left:963px;top:269.49px;font-size:8px;line-height:8px;color:#7a7a7a;transform:scaleX(0.831);">100%</span>
<div style="left:984px;top:266px;width:12px;height:15px;background:#6e6e6e;"></div>
<svg style="left:987px;top:272px" width="6" height="4"><path d="M0 0H6L3 3Z" fill="#eee"/></svg>
<div style="left:958px;top:285px;width:27px;height:15px;background:#3e3e3e;border:1px solid #333;box-sizing:border-box;"></div>
<span style="left:963px;top:288.49px;font-size:8px;line-height:8px;color:#7a7a7a;transform:scaleX(0.831);">100%</span>
<div style="left:984px;top:285px;width:12px;height:15px;background:#6e6e6e;"></div>
<svg style="left:987px;top:291px" width="6" height="4"><path d="M0 0H6L3 3Z" fill="#eee"/></svg>
<span style="left:948px;top:269.49px;font-size:8px;line-height:8px;color:#aaa;transform:scaleX(1.066);">yt:</span>
<span style="left:950px;top:288.49px;font-size:8px;line-height:8px;color:#aaa;transform:scaleX(1.039);">ll:</span>
<div style="left:845px;top:304px;width:143px;height:27px;background:#5a6a7e;"></div>
<span style="left:970px;top:311.99px;font-size:10px;line-height:10px;color:#e8e8e8;transform:scaleX(1.029);font-style:italic;">fx</span>
<div style="left:983px;top:304px;width:6px;height:27px;background:linear-gradient(90deg,#9a9a9a,#d0d0d0);"></div>
<div style="left:985px;top:315px;width:3px;height:1px;background:#333;"></div>
<div style="left:845px;top:331px;width:143px;height:26px;background:#4a4a4a;border-bottom:1px solid #2e2e2e;box-sizing:border-box;"></div>
<div style="left:845px;top:357px;width:143px;height:29px;background:#4a4a4a;border-bottom:1px solid #2e2e2e;box-sizing:border-box;"></div>
<svg style="left:969px;top:365px" width="9" height="12"><path d="M0.5 5.5H8.5V11.5H0.5Z" fill="none" stroke="#bbb"/><path d="M2.5 5.5V3.5Q4.5 0.5 6.5 3.5V5.5" stroke="#bbb" fill="none"/><rect x="3.5" y="7.5" width="2" height="2" fill="#bbb"/></svg>
<div style="left:845px;top:386px;width:143px;height:205px;background:#474747;"></div>
<div style="left:988px;top:304px;width:1px;height:287px;background:#3a3a3a;"></div>
<div style="left:989px;top:304px;width:11px;height:287px;background:#4a4a4a;"></div>
<div style="left:997px;top:243px;width:3px;height:348px;background:#3e3e3e;"></div>
<div style="left:845px;top:591px;width:155px;height:13px;background:#535353;border-top:1px solid #3a3a3a;box-sizing:border-box;"></div>
<svg style="left:858px;top:594px" width="11" height="7"><rect x="0.5" y="1.5" width="5" height="4" rx="2" fill="none" stroke="#888"/><rect x="5.5" y="1.5" width="5" height="4" rx="2" fill="none" stroke="#888"/></svg>
<span style="left:878px;top:592.99px;font-size:10px;line-height:10px;color:#ccc;transform:scaleX(1.029);font-style:italic;">fx</span>
<svg style="left:896px;top:593px" width="10" height="9"><rect width="10" height="9" fill="#ccc"/><circle cx="5" cy="4.5" r="2.6" fill="#555"/></svg>
<svg style="left:914px;top:593px" width="10" height="10"><circle cx="5" cy="5" r="4.5" fill="#ccc"/><path d="M3 8L7 2" stroke="#555" stroke-width="1.5"/></svg>
<svg style="left:933px;top:593px" width="11" height="9"><path d="M0 1H4L5 2H11V9H0Z" fill="#ccc"/></svg>
<svg style="left:953px;top:593px" width="9" height="10"><rect x="0" y="2" width="9" height="8" fill="#ccc"/><rect x="2" y="4" width="3" height="3" fill="#555"/></svg>
<svg style="left:972px;top:593px" width="10" height="10"><rect x="1" y="2" width="8" height="8" fill="#888"/><rect x="0" y="0" width="10" height="2" fill="#888"/></svg>
<svg style="left:8px;top:67px" width="13" height="11" viewBox="0 0 13 11"><path d="M0 0L0 7L1.6 5.6L3 8.5L4 8L2.8 5.2L5 5Z" fill="#c4c4c4"/><path d="M9 2.5V10.5M5.5 6.5H12.5" stroke="#c4c4c4" stroke-width="1"/></svg>
<svg style="left:8px;top:87px" width="12" height="5" viewBox="0 0 12 5"><rect x="0.5" y="0.5" width="11" height="4" fill="none" stroke="#c4c4c4" stroke-dasharray="2 1"/></svg>
<svg style="left:20px;top:95px" width="3" height="3"><path d="M3 0V3H0Z" fill="#ddd"/></svg>
<svg style="left:7px;top:102px" width="13" height="13" viewBox="0 0 13 13"><ellipse cx="6.5" cy="4.5" rx="5.5" ry="3.5" fill="none" stroke="#c4c4c4" stroke-width="1.2"/><path d="M2.5 7Q3 10 2 12" stroke="#c4c4c4" stroke-width="1" fill="none"/></svg>
<svg style="left:20px;top:113px" width="3" height="3"><path d="M3 0V3H0Z" fill="#ddd"/></svg>
<svg style="left:7px;top:119px" width="13" height="13" viewBox="0 0 13 13"><path d="M12 1L5 8" stroke="#c4c4c4" stroke-width="1.6"/><path d="M1 12Q1 8 4 7.5L6 9.5Q5 12 1 12Z" fill="#c4c4c4"/></svg>
<svg style="left:20px;top:131px" width="3" height="3"><path d="M3 0V3H0Z" fill="#ddd"/></svg>
<svg style="left:7px;top:137px" width="13" height="13" viewBox="0 0 13 13"><path d="M3 0V10H13M0 3H10V13" stroke="#c4c4c4" stroke-width="1.6" fill="none"/></svg>
<svg style="left:20px;top:149px" width="3" height="3"><path d="M3 0V3H0Z" fill="#ddd"/></svg>
<svg style="left:7px;top:155px" width="13" height="13" viewBox="0 0 13 13"><path d="M1 12L8 5" stroke="#c4c4c4" stroke-width="1.6"/><path d="M7 3L10 6L12.5 3.5Q13 1 10 0.5Z" fill="#c4c4c4"/></svg>
<svg style="left:20px;top:167px" width="3" height="3"><path d="M3 0V3H0Z" fill="#ddd"/></svg>
<svg style="left:6px;top:174px" width="14" height="13" viewBox="0 0 14 13"><rect x="1" y="4" width="12" height="5.5" rx="2.7" transform="rotate(-45 7 6.5)" fill="#c4c4c4"/><circle cx="7" cy="6.5" r="1.2" fill="#777"/></svg>
<svg style="left:20px;top:186px" width="3" height="3"><path d="M3 0V3H0Z" fill="#ddd"/></svg>
<svg style="left:7px;top:192px" width="13" height="13" viewBox="0 0 13 13"><path d="M12.5 0.5L6 7.5" stroke="#c4c4c4" stroke-width="1.6"/><path d="M0.5 12.5Q1.5 8 5 7.5L6.5 9Q5.5 12.5 0.5 12.5Z" fill="#c4c4c4"/></svg>
<svg style="left:20px;top:204px" width="3" height="3"><path d="M3 0V3H0Z" fill="#ddd"/></svg>
<svg style="left:7px;top:210px" width="13" height="12" viewBox="0 0 13 12"><rect x="5" y="0" width="3" height="6" rx="1.5" fill="#c4c4c4"/><rect x="1" y="6" width="11" height="3" fill="#c4c4c4"/><rect x="0" y="10" width="13" height="2" fill="#c4c4c4"/></svg>
<svg style="left:20px;top:222px" width="3" height="3"><path d="M3 0V3H0Z" fill="#ddd"/></svg>
<svg style="left:7px;top:229px" width="13" height="13" viewBox="0 0 13 13"><path d="M12.5 0.5L6 7.5" stroke="#c4c4c4" stroke-width="1.6"/><path d="M0.5 12.5Q1.5 8 5 7.5L6.5 9Q5.5 12.5 0.5 12.5Z" fill="#c4c4c4"/><path d="M1 5Q2 1 6 1" stroke="#c4c4c4" stroke-width="1" fill="none"/></svg>
<svg style="left:20px;top:240px" width="3" height="3"><path d="M3 0V3H0Z" fill="#ddd"/></svg>
<svg style="left:7px;top:247px" width="13" height="11" viewBox="0 0 13 11"><path d="M0 8L6 1H13L7 8Z" fill="#c4c4c4"/><path d="M0 8H7V10H0Z" fill="#aaa"/></svg>
<svg style="left:20px;top:258px" width="3" height="3"><path d="M3 0V3H0Z" fill="#ddd"/></svg>
<svg style="left:7px;top:266px" width="13" height="12" viewBox="0 0 13 12"><defs><linearGradient id="gg"><stop offset="0" stop-color="#333"/><stop offset="1" stop-color="#ddd"/></linearGradient></defs><rect x="0.5" y="0.5" width="12" height="11" fill="url(#gg)" stroke="#ddd"/></svg>
<svg style="left:20px;top:277px" width="3" height="3"><path d="M3 0V3H0Z" fill="#ddd"/></svg>
<svg style="left:8px;top:283px" width="11" height="13" viewBox="0 0 11 13"><path d="M5.5 0Q0 7 1 9.5Q2.5 13 5.5 13Q8.5 13 10 9.5Q11 7 5.5 0Z" fill="#c4c4c4"/></svg>
<svg style="left:20px;top:295px" width="3" height="3"><path d="M3 0V3H0Z" fill="#ddd"/></svg>
<svg style="left:7px;top:301px" width="13" height="13" viewBox="0 0 13 13"><circle cx="5" cy="5" r="4.2" fill="#c4c4c4"/><path d="M7.5 7.5L12 12" stroke="#c4c4c4" stroke-width="2"/></svg>
<svg style="left:20px;top:313px" width="3" height="3"><path d="M3 0V3H0Z" fill="#ddd"/></svg>
<svg style="left:7px;top:321px" width="13" height="14" viewBox="0 0 13 14"><path d="M6.5 0L12 5.5L8 12H4L1 9Z" fill="#c4c4c4"/><circle cx="6.5" cy="6.5" r="1.2" fill="#555"/><path d="M2 10L0 13" stroke="#c4c4c4" stroke-width="1.5"/></svg>
<svg style="left:20px;top:333px" width="3" height="3"><path d="M3 0V3H0Z" fill="#ddd"/></svg>
<span style="left:8px;top:338.98px;font-size:15px;line-height:15px;color:#c4c4c4;transform:scaleX(1.091);font-family:"Liberation Serif",serif;">T</span>
<svg style="left:20px;top:351px" width="3" height="3"><path d="M3 0V3H0Z" fill="#ddd"/></svg>
<svg style="left:9px;top:357px" width="10" height="14" viewBox="0 0 10 14"><path d="M1 0V12L4 9L6.5 13.5L8 12.5L5.5 8.5H9.5Z" fill="#c4c4c4"/></svg>
<svg style="left:20px;top:370px" width="3" height="3"><path d="M3 0V3H0Z" fill="#ddd"/></svg>
<svg style="left:7px;top:376px" width="13" height="13" viewBox="0 0 13 13"><path d="M1 12L12 1" stroke="#c4c4c4" stroke-width="1.4"/></svg>
<svg style="left:20px;top:388px" width="3" height="3"><path d="M3 0V3H0Z" fill="#ddd"/></svg>
<div style="left:3px;top:395px;width:22px;height:17px;background:#3a3a3a;border-radius:2px;"></div>
<svg style="left:7px;top:396px" width="15" height="15" viewBox="0 0 15 15"><path d="M4 14 L2 8 Q1.5 6.5 3 7 L4.5 9 L4 3 Q4.5 2 5.5 3 L6 7 L6.5 1.8 Q7.5 1 8.3 2 L8.5 7 L9.5 2.5 Q10.5 2 11 3 L10.5 8 L12 5 Q13 4.5 13.3 5.5 L12 11 Q11 14 9 14.5 Z" fill="#d8d8d8"/></svg>
<svg style="left:20px;top:408px" width="3" height="3"><path d="M3 0V3H0Z" fill="#ddd"/></svg>
<svg style="left:8px;top:414px" width="12" height="12" viewBox="0 0 12 12"><circle cx="4.8" cy="4.8" r="3.8" fill="none" stroke="#c4c4c4" stroke-width="1.6"/><path d="M7.5 7.5L11.5 11.5" stroke="#c4c4c4" stroke-width="2.2"/></svg>
<svg style="left:4px;top:431px" width="20" height="9" viewBox="0 0 20 9"><rect x="0.5" y="0.5" width="5" height="5" fill="#111" stroke="#ddd" stroke-width="0.8"/><rect x="3" y="3" width="5" height="5" fill="#eee"/><path d="M15 1H18V4M15 1L18 4" stroke="#c4c4c4" stroke-width="1" fill="none"/></svg>
<div style="left:10px;top:450px;width:13px;height:13px;background:#ffffff;border:1px solid #777;box-sizing:border-box;"></div>
<div style="left:3px;top:442px;width:14px;height:14px;background:#000000;border:1px solid #999;box-sizing:border-box;"></div>
<svg style="left:7px;top:467px" width="13" height="11" viewBox="0 0 13 11"><rect x="0.5" y="0.5" width="12" height="10" fill="none" stroke="#c4c4c4"/><circle cx="6.5" cy="5.5" r="3" fill="none" stroke="#c4c4c4"/></svg>
<svg style="left:7px;top:486px" width="14" height="12" viewBox="0 0 14 12"><rect x="3.5" y="0.5" width="10" height="7" fill="none" stroke="#c4c4c4"/><rect x="0.5" y="3.5" width="10" height="7" fill="#777" stroke="#c4c4c4"/></svg>
<svg style="left:20px;top:496px" width="3" height="3"><path d="M3 0V3H0Z" fill="#ddd"/></svg>
<div style="left:5px;top:171px;width:18px;height:1px;background:#474747;"></div>
<div style="left:5px;top:172px;width:18px;height:1px;background:#5c5c5c;"></div>
<svg style="left:12px;top:597px" width="16" height="7"><circle cx="8" cy="10" r="7" fill="none" stroke="#dfe6ee" stroke-width="2"/></svg>
<div style="left:502px;top:93px;width:446px;height:339px;background:linear-gradient(90deg,#aac4e0 0px,#bedaf6 5px,#bad6f4 296px,#8a9cb0 301px,#4c5258 305px,#565a60 325px,#5a6462 343px,#789a84 352px,#6a9ea6 372px,#80a4c0 395px,#8c94b4 410px,#b0b8c4 446px);border:1px solid #2c3640;border-radius:6px 6px 4px 4px;box-sizing:border-box;box-shadow:2px 3px 9px 1px rgba(0,0,0,0.45);"></div>
<svg style="left:502px;top:94px;filter:blur(1.6px)" width="446" height="19"><rect x="4.1" y="0" width="4" height="18" fill="#a0bce4" opacity="0.3"/><rect x="21.5" y="0" width="4" height="18" fill="#7898c8" opacity="0.45"/><rect x="38.8" y="0" width="4" height="18" fill="#a0bce4" opacity="0.3"/><rect x="56.2" y="0" width="4" height="18" fill="#a0bce4" opacity="0.3"/><rect x="73.6" y="0" width="4" height="18" fill="#a0bce4" opacity="0.3"/><rect x="90.9" y="0" width="4" height="18" fill="#7898c8" opacity="0.45"/><rect x="108.3" y="0" width="4" height="18" fill="#a0bce4" opacity="0.3"/><rect x="125.6" y="0" width="4" height="18" fill="#a0bce4" opacity="0.3"/><rect x="143.0" y="0" width="4" height="18" fill="#a0bce4" opacity="0.3"/><rect x="160.4" y="0" width="4" height="18" fill="#7898c8" opacity="0.45"/><rect x="177.7" y="0" width="4" height="18" fill="#a0bce4" opacity="0.3"/><rect x="195.1" y="0" width="4" height="18" fill="#a0bce4" opacity="0.3"/><rect x="212.4" y="0" width="4" height="18" fill="#a0bce4" opacity="0.3"/><rect x="229.8" y="0" width="4" height="18" fill="#7898c8" opacity="0.45"/><rect x="247.2" y="0" width="4" height="18" fill="#a0bce4" opacity="0.3"/><rect x="264.5" y="0" width="4" height="18" fill="#a0bce4" opacity="0.3"/><rect x="281.9" y="0" width="4" height="18" fill="#a0bce4" opacity="0.3"/></svg>
<div style="left:504px;top:94px;width:442px;height:8px;background:linear-gradient(rgba(255,255,255,0.28),rgba(255,255,255,0));border-radius:5px 5px 0 0;"></div>
<span style="left:508px;top:98.98px;font-size:10px;line-height:10px;color:#1a1a1a;transform:scaleX(0.800);">Layer Style</span>
<div style="left:912px;top:94px;width:33px;height:13px;background:linear-gradient(#e8a89c 0%,#d88070 45%,#c83c28 50%,#d04a30 85%,#e0a080 100%);border:1px solid #6a2820;border-top:none;border-radius:0 0 4px 4px;box-sizing:border-box;"></div>
<svg style="left:924px;top:97px" width="9" height="8"><path d="M1.5 1L7.5 7M7.5 1L1.5 7" stroke="#fff" stroke-width="1.7"/></svg>
<div style="left:507px;top:113px;width:437px;height:314px;background:#f0f0f0;border:1px solid #8696a8;box-sizing:border-box;"></div>
<div style="left:516px;top:123px;width:101px;height:294px;background:#ececec;border:1px solid #a8a8a8;box-sizing:border-box;"></div>
<div style="left:517px;top:124px;width:99px;height:14.5px;background:#eeeeee;"></div>
<div style="left:517px;top:138.5px;width:99px;height:2.5px;background:#c8c8c8;"></div>
<span style="left:520.6px;top:127.04px;font-size:8.5px;line-height:8.5px;color:#111;transform:scaleX(0.760);">Styles</span>
<div style="left:517px;top:141px;width:99px;height:14px;background:#eeeeee;"></div>
<div style="left:517px;top:155px;width:99px;height:1px;background:#c8c8c8;"></div>
<span style="left:520.6px;top:143.94px;font-size:8.5px;line-height:8.5px;color:#111;transform:scaleX(0.824);">Blending Options: Default</span>
<div style="left:517px;top:169.7px;width:99px;height:1px;background:#f8f8f8;"></div>
<div style="left:520px;top:159.5px;width:7.5px;height:7.5px;background:linear-gradient(#dcdcdc,#f8f8f8);border:1px solid #a4a4a4;box-sizing:border-box;"></div>
<span style="left:531px;top:158.84px;font-size:8.5px;line-height:8.5px;color:#111;transform:scaleX(0.781);">Bevel &amp; Emboss</span>
<div style="left:517px;top:184.98px;width:99px;height:1px;background:#f8f8f8;"></div>
<div style="left:529px;top:174.78px;width:7.5px;height:7.5px;background:linear-gradient(#dcdcdc,#f8f8f8);border:1px solid #a4a4a4;box-sizing:border-box;"></div>
<span style="left:540px;top:174.12px;font-size:8.5px;line-height:8.5px;color:#111;transform:scaleX(0.780);">Contour</span>
<div style="left:517px;top:200.26px;width:99px;height:1px;background:#f8f8f8;"></div>
<div style="left:529px;top:190.06px;width:7.5px;height:7.5px;background:linear-gradient(#dcdcdc,#f8f8f8);border:1px solid #a4a4a4;box-sizing:border-box;"></div>
<span style="left:540px;top:189.40px;font-size:8.5px;line-height:8.5px;color:#111;transform:scaleX(0.847);">Texture</span>
<div style="left:517px;top:215.54px;width:99px;height:1px;background:#f8f8f8;"></div>
<div style="left:520px;top:205.34px;width:7.5px;height:7.5px;background:linear-gradient(#dcdcdc,#f8f8f8);border:1px solid #a4a4a4;box-sizing:border-box;"></div>
<span style="left:531px;top:204.68px;font-size:8.5px;line-height:8.5px;color:#111;transform:scaleX(0.794);">Stroke</span>
<div style="left:517px;top:230.82px;width:99px;height:1px;background:#f8f8f8;"></div>
<div style="left:520px;top:220.62px;width:7.5px;height:7.5px;background:linear-gradient(#dcdcdc,#f8f8f8);border:1px solid #a4a4a4;box-sizing:border-box;"></div>
<span style="left:531px;top:219.96px;font-size:8.5px;line-height:8.5px;color:#111;transform:scaleX(0.835);">Inner Shadow</span>
<div style="left:517px;top:246.1px;width:99px;height:1px;background:#f8f8f8;"></div>
<div style="left:520px;top:235.9px;width:7.5px;height:7.5px;background:linear-gradient(#dcdcdc,#f8f8f8);border:1px solid #a4a4a4;box-sizing:border-box;"></div>
<span style="left:531px;top:235.24px;font-size:8.5px;line-height:8.5px;color:#111;transform:scaleX(0.827);">Inner Glow</span>
<div style="left:517px;top:261.38px;width:99px;height:1px;background:#f8f8f8;"></div>
<div style="left:520px;top:251.17999999999998px;width:7.5px;height:7.5px;background:linear-gradient(#dcdcdc,#f8f8f8);border:1px solid #a4a4a4;box-sizing:border-box;"></div>
<span style="left:531px;top:250.52px;font-size:8.5px;line-height:8.5px;color:#111;transform:scaleX(0.774);">Satin</span>
<div style="left:517px;top:263px;width:99px;height:14px;background:#3399f3;"></div>
<div style="left:520px;top:266.46px;width:7.5px;height:7.5px;background:#f4f8fc;border:1px solid #a4a4a4;box-sizing:border-box;"></div>
<svg style="left:520px;top:266.1px" width="8" height="8"><path d="M1.8 4.2L3.3 6L6.5 1" stroke="#1a2a60" stroke-width="1.3" fill="none"/></svg>
<span style="left:531px;top:265.80px;font-size:8.5px;line-height:8.5px;color:#14244a;transform:scaleX(0.762);">Color Overlay</span>
<div style="left:517px;top:291.94px;width:99px;height:1px;background:#f8f8f8;"></div>
<div style="left:520px;top:281.73999999999995px;width:7.5px;height:7.5px;background:linear-gradient(#dcdcdc,#f8f8f8);border:1px solid #a4a4a4;box-sizing:border-box;"></div>
<span style="left:531px;top:281.08px;font-size:8.5px;line-height:8.5px;color:#111;transform:scaleX(0.794);">Gradient Overlay</span>
<div style="left:517px;top:307.22px;width:99px;height:1px;background:#f8f8f8;"></div>
<div style="left:520px;top:297.02px;width:7.5px;height:7.5px;background:linear-gradient(#dcdcdc,#f8f8f8);border:1px solid #a4a4a4;box-sizing:border-box;"></div>
<span style="left:531px;top:296.36px;font-size:8.5px;line-height:8.5px;color:#111;transform:scaleX(0.796);">Pattern Overlay</span>
<div style="left:517px;top:322.5px;width:99px;height:1px;background:#f8f8f8;"></div>
<div style="left:520px;top:312.29999999999995px;width:7.5px;height:7.5px;background:linear-gradient(#dcdcdc,#f8f8f8);border:1px solid #a4a4a4;box-sizing:border-box;"></div>
<span style="left:531px;top:311.64px;font-size:8.5px;line-height:8.5px;color:#111;transform:scaleX(0.791);">Outer Glow</span>
<div style="left:517px;top:337.78px;width:99px;height:1px;background:#f8f8f8;"></div>
<div style="left:520px;top:327.5799999999999px;width:7.5px;height:7.5px;background:linear-gradient(#dcdcdc,#f8f8f8);border:1px solid #a4a4a4;box-sizing:border-box;"></div>
<span style="left:531px;top:326.92px;font-size:8.5px;line-height:8.5px;color:#111;transform:scaleX(0.812);">Drop Shadow</span>
<div style="left:628px;top:126px;width:236px;height:293px;background:transparent;border:1px solid #c4c4c4;box-sizing:border-box;"></div>
<div style="left:641px;top:121px;width:53px;height:10px;background:#f0f0f0;"></div>
<span style="left:644px;top:121.54px;font-size:8.5px;line-height:8.5px;color:#111;font-weight:700;transform:scaleX(0.843);">Color Overlay</span>
<div style="left:635px;top:136px;width:221px;height:43.5px;background:transparent;border:1px solid #c4c4c4;box-sizing:border-box;"></div>
<div style="left:648px;top:131px;width:23px;height:9px;background:#f0f0f0;"></div>
<span style="left:651px;top:131.04px;font-size:8.5px;line-height:8.5px;color:#111;font-weight:700;transform:scaleX(0.766);">Color</span>
<span style="left:650px;top:146.74px;font-size:8.5px;line-height:8.5px;color:#222;transform:scaleX(0.807);">Blend Mode:</span>
<div style="left:692px;top:143.7px;width:84px;height:14.6px;background:#ffffff;border:1px solid #e0e0e0;box-sizing:border-box;"></div>
<span style="left:695.5px;top:146.94px;font-size:8.5px;line-height:8.5px;color:#111;transform:scaleX(0.785);">Normal</span>
<svg style="left:767px;top:149px" width="6" height="4"><path d="M0 0H6L3 3.5Z" fill="#111"/></svg>
<div style="left:778.5px;top:146px;width:29.5px;height:9.5px;background:#0a5fd6;"></div>
<span style="left:662px;top:163.04px;font-size:8.5px;line-height:8.5px;color:#222;transform:scaleX(0.834);">Opacity:</span>
<div style="left:695px;top:165px;width:68px;height:3.5px;background:linear-gradient(#8c8c8c,#d0d0d0);border-radius:2px;"></div>
<svg style="left:758px;top:163px" width="10" height="11"><path d="M1 10V5L5 1L9 5V10Z" fill="#f4f4f4" stroke="#8a8a8a" stroke-width="1"/></svg>
<div style="left:770px;top:161px;width:36px;height:13.3px;background:#ffffff;border:1px solid #e6e6e6;box-sizing:border-box;"></div>
<span style="left:773.5px;top:163.34px;font-size:8.5px;line-height:8.5px;color:#111;transform:scaleX(0.670);">100</span>
<span style="left:808.5px;top:163.04px;font-size:8.5px;line-height:8.5px;color:#222;transform:scaleX(0.794);">%</span>
<div style="left:680px;top:184.3px;width:57.5px;height:12.0px;background:linear-gradient(#f2f2f2 0%,#ebebeb 48%,#dddddd 52%,#cfcfcf 100%);border:1px solid #858585;box-sizing:border-box;border-radius:3px;box-shadow:inset 0 0 0 1px #fbfbfb;"></div>
<span style="left:688.35px;top:186.54px;font-size:8.5px;line-height:8.5px;color:#111;transform:scaleX(0.815);">Make Default</span>
<div style="left:744.7px;top:184.3px;width:67.0px;height:12.199999999999989px;background:linear-gradient(#f2f2f2 0%,#ebebeb 48%,#dddddd 52%,#cfcfcf 100%);border:1px solid #858585;box-sizing:border-box;border-radius:3px;box-shadow:inset 0 0 0 1px #fbfbfb;"></div>
<span style="left:754.2px;top:186.64px;font-size:8.5px;line-height:8.5px;color:#111;transform:scaleX(0.788);">Reset to Default</span>
<div style="left:875px;top:123px;width:61.5px;height:12.800000000000011px;background:linear-gradient(#e8f6fd 0%,#d6eefb 48%,#bee6fd 52%,#a6d9f4 100%);border:1px solid #3c7fb1;box-sizing:border-box;border-radius:3px;box-shadow:inset 0 0 0 1px #7ed3f8;"></div>
<span style="left:900.0px;top:125.58px;font-size:10px;line-height:10px;color:#111;transform:scaleX(0.796);">OK</span>
<div style="left:875px;top:142.6px;width:61.5px;height:12.200000000000017px;background:linear-gradient(#f2f2f2 0%,#ebebeb 48%,#dddddd 52%,#cfcfcf 100%);border:1px solid #858585;box-sizing:border-box;border-radius:3px;box-shadow:inset 0 0 0 1px #fbfbfb;"></div>
<span style="left:893.4px;top:144.88px;font-size:10px;line-height:10px;color:#111;transform:scaleX(0.794);">Cancel</span>
<div style="left:875px;top:162px;width:61.5px;height:12.800000000000011px;background:linear-gradient(#f2f2f2 0%,#ebebeb 48%,#dddddd 52%,#cfcfcf 100%);border:1px solid #858585;box-sizing:border-box;border-radius:3px;box-shadow:inset 0 0 0 1px #fbfbfb;"></div>
<span style="left:882.4px;top:164.59px;font-size:10px;line-height:10px;color:#111;transform:scaleX(0.875);">New Style...</span>
<div style="left:884px;top:182px;width:7.5px;height:7.5px;background:#f4f8fc;border:1px solid #8a8a8a;box-sizing:border-box;"></div>
<svg style="left:884px;top:181px" width="8" height="9"><path d="M1.8 4.8L3.3 7L6.5 1.2" stroke="#1a2a60" stroke-width="1.3" fill="none"/></svg>
<span style="left:894px;top:180.79px;font-size:10px;line-height:10px;color:#111;transform:scaleX(0.829);">Preview</span>
<div style="left:882px;top:195.5px;width:46.5px;height:44.5px;background:#d2d2d2;border:1px solid #e4e4e4;box-sizing:border-box;"></div>
<div style="left:894px;top:207.5px;width:21px;height:21.5px;background:#0a5fd6;"></div>
<div style="left:805px;top:427px;width:142px;height:4px;background:linear-gradient(90deg,#8a9aac,#7a8696 40%,#8a96a6);"></div>
<div style="left:944px;top:112px;width:3px;height:315px;background:linear-gradient(#a8b4c4,#c0cad6 40%,#9aa6b4);"></div>
</body></html>
